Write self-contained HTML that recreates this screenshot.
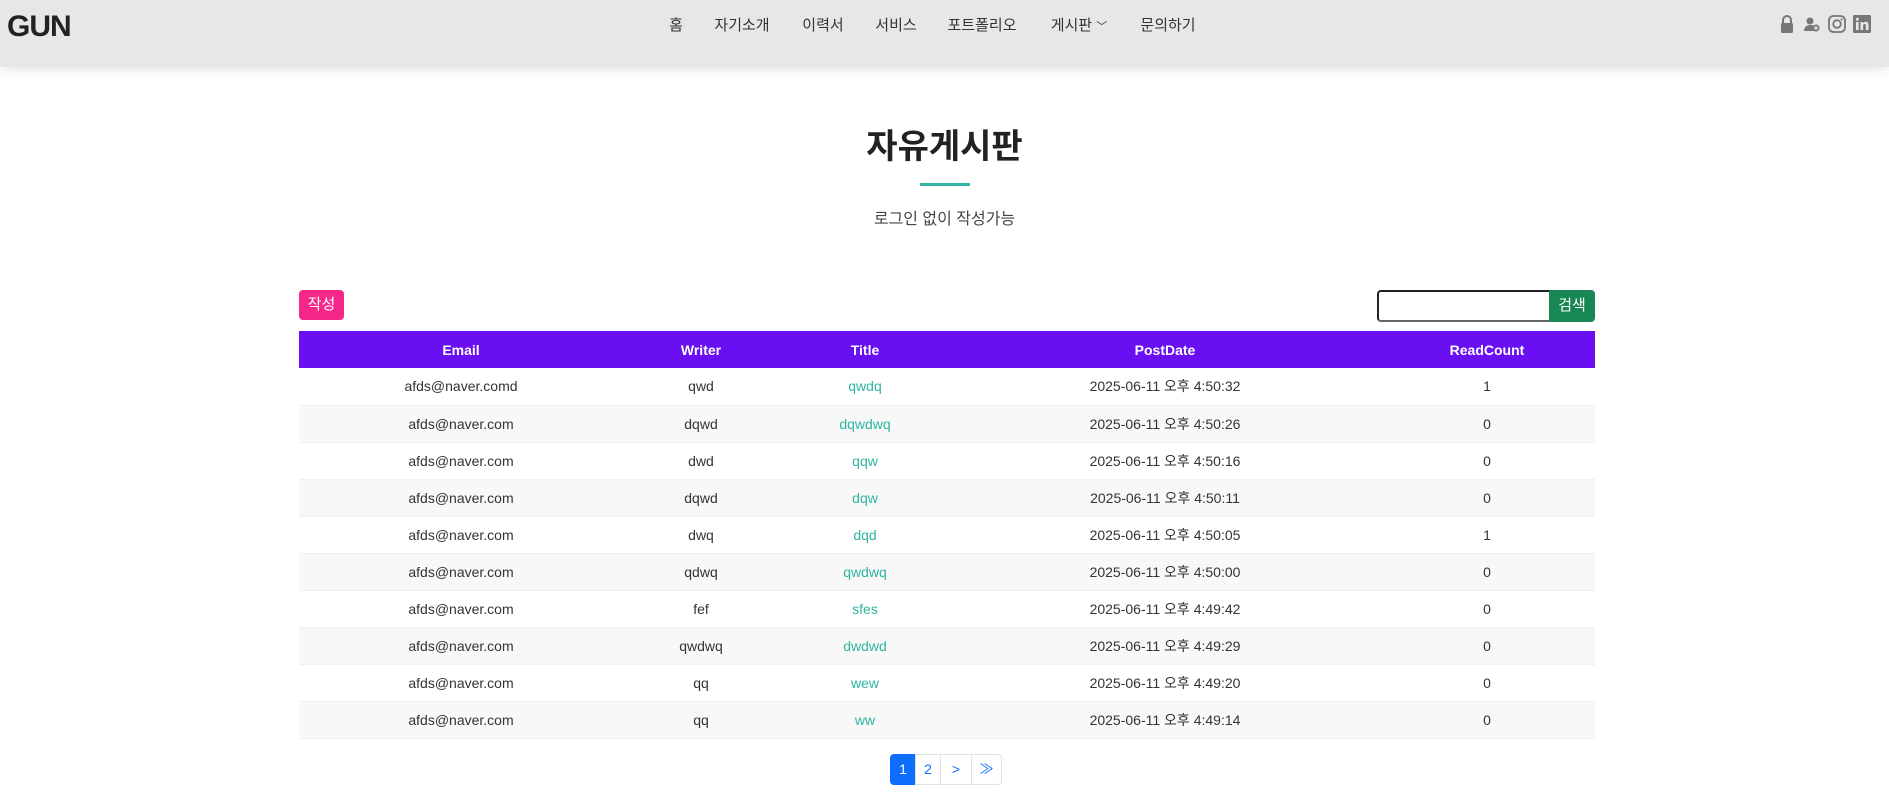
<!DOCTYPE html>
<html><head><meta charset="utf-8"><style>
*{margin:0;padding:0;box-sizing:border-box}
body{width:1889px;height:808px;background:#fff;font-family:"Liberation Sans","Noto Sans CJK KR",sans-serif;color:#444;position:relative;overflow:hidden}
.hdr{position:absolute;left:0;top:0;width:1889px;height:67px;background:#e8e7e5;box-shadow:0 2px 12px rgba(0,0,0,.12)}
.logo{position:absolute;left:7px;top:10px;font-size:30px;font-weight:bold;color:#222;letter-spacing:-1px}
.nav{position:absolute;top:14px;font-size:15px;color:#333;transform:translateX(-50%);white-space:nowrap}
.ic{position:absolute;top:15px}
h1{position:absolute;top:119px;width:100%;text-align:center;font-size:34px;font-weight:bold;color:#222;font-family:"Noto Sans CJK KR",sans-serif}
.line{position:absolute;left:920px;top:183px;width:50px;height:3px;background:#2fb5a0}
.sub{position:absolute;top:205px;width:100%;text-align:center;font-size:16px;color:#444}
.wbtn{position:absolute;left:299px;top:290px;width:45px;height:30px;background:#f52789;color:#fff;border-radius:4px;font-size:15px;text-align:center;line-height:29px}
.sin{position:absolute;left:1377px;top:290px;width:173px;height:32px;border:2px solid #222;border-right:none;border-radius:4px 0 0 4px;border-bottom-color:#666}
.sbtn{position:absolute;left:1549px;top:290px;width:46px;height:32px;background:#198754;color:#fff;border-radius:0 4px 4px 0;font-size:15px;text-align:center;line-height:31px}
table{position:absolute;left:299px;top:331px;width:1296px;border-collapse:collapse;font-size:14px}
th{background:#6a0ff2;color:#fff;height:37px;font-weight:bold}
td{height:37px;text-align:center;color:#333;border-bottom:1px solid #f0f0f0}
tr:nth-child(odd) td{background:#f8f8f8}
td.t{color:#2fb5a0}
.pg{position:absolute;left:890px;top:754px;display:flex;font-size:14px}
.pg div{height:31px;border:1px solid #dee2e6;color:#0d6efd;text-align:center;line-height:29px;margin-left:-1px}
</style></head><body>
<div class="hdr">
<div class="logo">GUN</div>
<div class="nav" style="left:676px">홈</div>
<div class="nav" style="left:742px">자기소개</div>
<div class="nav" style="left:823px">이력서</div>
<div class="nav" style="left:896px">서비스</div>
<div class="nav" style="left:982px">포트폴리오</div>
<div class="nav" style="left:1079px">게시판 <span style="font-size:11px">﹀</span></div>
<div class="nav" style="left:1168px">문의하기</div>
<svg class="ic" style="left:1779px" width="16" height="18" viewBox="0 0 16 18"><path d="M4 8V5a4 4 0 0 1 8 0v3" stroke="#777" stroke-width="2" fill="none"/><rect x="2" y="8" width="12" height="10" rx="1.5" fill="#777"/></svg>
<svg class="ic" style="left:1804px" width="16" height="18" viewBox="0 0 16 18"><circle cx="6" cy="6" r="3.5" fill="#777"/><path d="M0 16c0-4 3-6 6-6s4 1 5 2v4z" fill="#777"/><circle cx="12" cy="13" r="3.5" fill="#777"/><path d="M10 13h4M12 11v4" stroke="#e8e7e5" stroke-width="1.2"/></svg>
<svg class="ic" style="left:1828px" width="18" height="18" viewBox="0 0 18 18"><rect x="1" y="1" width="16" height="16" rx="4.5" stroke="#777" stroke-width="1.8" fill="none"/><circle cx="9" cy="9" r="3.8" stroke="#777" stroke-width="1.8" fill="none"/><circle cx="13.6" cy="4.4" r="1" fill="#777"/></svg>
<svg class="ic" style="left:1853px" width="18" height="18" viewBox="0 0 18 18"><rect width="18" height="18" rx="1.5" fill="#777"/><rect x="3" y="7" width="2.6" height="8" fill="#e8e7e5"/><circle cx="4.3" cy="4.3" r="1.5" fill="#e8e7e5"/><path d="M7.5 7h2.5v1.3c.6-1 1.6-1.5 2.8-1.5 2 0 2.7 1.3 2.7 3.5V15h-2.6v-4.2c0-1.1-.3-1.8-1.3-1.8s-1.5.8-1.5 1.8V15H7.5z" fill="#e8e7e5"/></svg>
</div>
<h1>자유게시판</h1>
<div class="line"></div>
<div class="sub">로그인 없이 작성가능</div>
<div class="wbtn">작성</div>
<div class="sin"></div><div class="sbtn">검색</div>
<table>
<tr><th style="width:324px">Email</th><th style="width:156px">Writer</th><th style="width:172px">Title</th><th style="width:428px">PostDate</th><th>ReadCount</th></tr>
<tr><td>afds@naver.comd</td><td>qwd</td><td class="t">qwdq</td><td>2025-06-11 오후 4:50:32</td><td>1</td></tr>
<tr><td>afds@naver.com</td><td>dqwd</td><td class="t">dqwdwq</td><td>2025-06-11 오후 4:50:26</td><td>0</td></tr>
<tr><td>afds@naver.com</td><td>dwd</td><td class="t">qqw</td><td>2025-06-11 오후 4:50:16</td><td>0</td></tr>
<tr><td>afds@naver.com</td><td>dqwd</td><td class="t">dqw</td><td>2025-06-11 오후 4:50:11</td><td>0</td></tr>
<tr><td>afds@naver.com</td><td>dwq</td><td class="t">dqd</td><td>2025-06-11 오후 4:50:05</td><td>1</td></tr>
<tr><td>afds@naver.com</td><td>qdwq</td><td class="t">qwdwq</td><td>2025-06-11 오후 4:50:00</td><td>0</td></tr>
<tr><td>afds@naver.com</td><td>fef</td><td class="t">sfes</td><td>2025-06-11 오후 4:49:42</td><td>0</td></tr>
<tr><td>afds@naver.com</td><td>qwdwq</td><td class="t">dwdwd</td><td>2025-06-11 오후 4:49:29</td><td>0</td></tr>
<tr><td>afds@naver.com</td><td>qq</td><td class="t">wew</td><td>2025-06-11 오후 4:49:20</td><td>0</td></tr>
<tr><td>afds@naver.com</td><td>qq</td><td class="t">ww</td><td>2025-06-11 오후 4:49:14</td><td>0</td></tr>
</table>
<div class="pg">
<div style="width:26px;background:#0d6efd;color:#fff;border-color:#0d6efd;border-radius:4px 0 0 4px;margin-left:0">1</div>
<div style="width:26px">2</div>
<div style="width:32px">&gt;</div>
<div style="width:31px;border-radius:0 4px 4px 0">≫</div>
</div>
</body></html>
